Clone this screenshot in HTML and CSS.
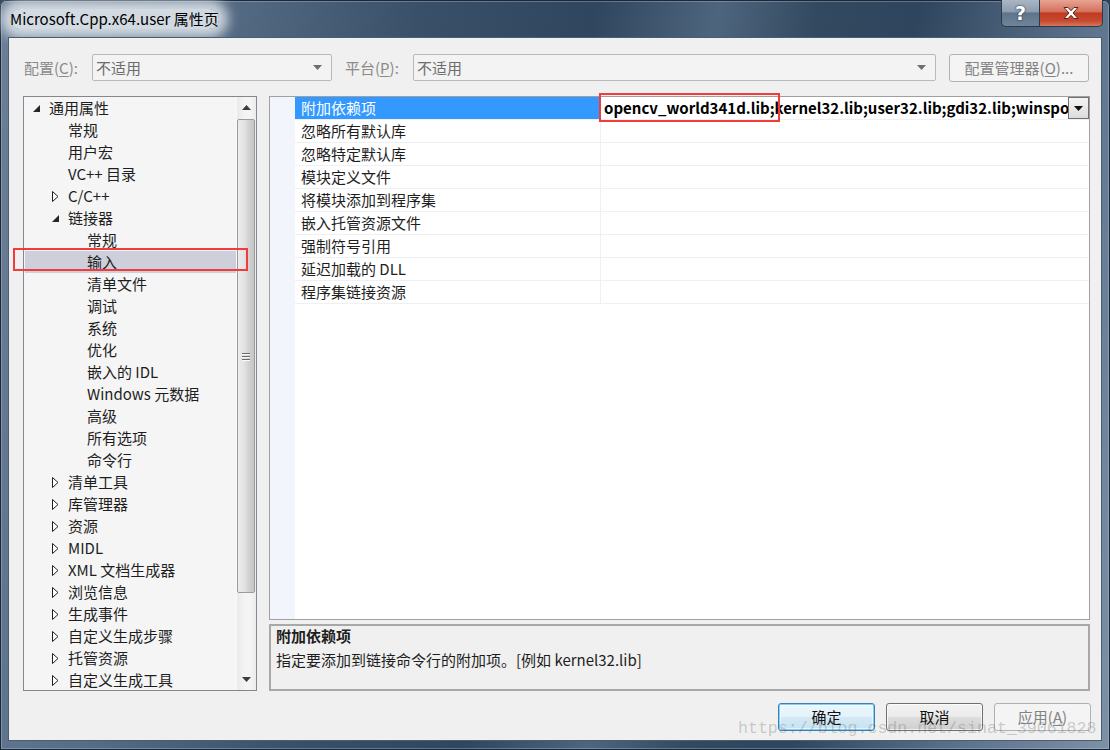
FILE: index.html
```html
<!DOCTYPE html>
<html lang="zh-CN">
<head>
<meta charset="utf-8">
<title>Microsoft.Cpp.x64.user 属性页</title>
<link rel="stylesheet" href="styles.css">
</head>
<body>
<div class="window">
  <div class="titlebar">
    <div class="title"><span class="title-glow">Microsoft.Cpp.x64.user 属性页</span></div>
    <div class="caption-btns">
      <div class="cap help">?</div>
      <div class="cap close">
        <svg width="20" height="14" viewBox="0 0 20 14"><path d="M3 1.5h4l3 3.2 3-3.2h4l-5 5.5 5 5.5h-4l-3-3.2-3 3.2H3l5-5.5z" fill="#fff" stroke="#5a2218" stroke-width="1" stroke-linejoin="round"/></svg>
      </div>
    </div>
  </div>
  <div class="client">
    <div class="toprow">
      <div class="lbl lbl1">配置(<u>C</u>):</div>
      <div class="combo combo1"><span>不适用</span><svg class="combo-arrow" width="9" height="5" viewBox="0 0 9 5"><path d="M0 0h9L4.5 5z" fill="#6e6e6e"/></svg></div>
      <div class="lbl lbl2">平台(<u>P</u>):</div>
      <div class="combo combo2"><span>不适用</span><svg class="combo-arrow" width="9" height="5" viewBox="0 0 9 5"><path d="M0 0h9L4.5 5z" fill="#6e6e6e"/></svg></div>
      <div class="spacer"></div>
      <div class="btn btn-disabled cfgmgr">配置管理器(<u>O</u>)...</div>
    </div>

    <div class="main">
      <div class="tree">
        <div class="tree-items">
          <div class="trow l0"><span class="exp"><svg width="8" height="8" viewBox="0 0 8 8"><path d="M7 0V7H0Z" fill="#262626"/></svg></span>通用属性</div>
          <div class="trow l1"><span class="exp"></span>常规</div>
          <div class="trow l1"><span class="exp"></span>用户宏</div>
          <div class="trow l1"><span class="exp"></span>VC++ 目录</div>
          <div class="trow l1"><span class="exp"><svg width="7" height="11" viewBox="0 0 7 11"><path d="M0.5 0.5L6 5.5L0.5 10.5Z" fill="#fff" stroke="#1e1e1e"/></svg></span>C/C++</div>
          <div class="trow l1"><span class="exp"><svg width="8" height="8" viewBox="0 0 8 8"><path d="M7 0V7H0Z" fill="#262626"/></svg></span>链接器</div>
          <div class="trow l2"><span class="exp"></span>常规</div>
          <div class="trow l2 selected"><span class="exp"></span>输入</div>
          <div class="trow l2"><span class="exp"></span>清单文件</div>
          <div class="trow l2"><span class="exp"></span>调试</div>
          <div class="trow l2"><span class="exp"></span>系统</div>
          <div class="trow l2"><span class="exp"></span>优化</div>
          <div class="trow l2"><span class="exp"></span>嵌入的 IDL</div>
          <div class="trow l2"><span class="exp"></span>Windows 元数据</div>
          <div class="trow l2"><span class="exp"></span>高级</div>
          <div class="trow l2"><span class="exp"></span>所有选项</div>
          <div class="trow l2"><span class="exp"></span>命令行</div>
          <div class="trow l1"><span class="exp"><svg width="7" height="11" viewBox="0 0 7 11"><path d="M0.5 0.5L6 5.5L0.5 10.5Z" fill="#fff" stroke="#1e1e1e"/></svg></span>清单工具</div>
          <div class="trow l1"><span class="exp"><svg width="7" height="11" viewBox="0 0 7 11"><path d="M0.5 0.5L6 5.5L0.5 10.5Z" fill="#fff" stroke="#1e1e1e"/></svg></span>库管理器</div>
          <div class="trow l1"><span class="exp"><svg width="7" height="11" viewBox="0 0 7 11"><path d="M0.5 0.5L6 5.5L0.5 10.5Z" fill="#fff" stroke="#1e1e1e"/></svg></span>资源</div>
          <div class="trow l1"><span class="exp"><svg width="7" height="11" viewBox="0 0 7 11"><path d="M0.5 0.5L6 5.5L0.5 10.5Z" fill="#fff" stroke="#1e1e1e"/></svg></span>MIDL</div>
          <div class="trow l1"><span class="exp"><svg width="7" height="11" viewBox="0 0 7 11"><path d="M0.5 0.5L6 5.5L0.5 10.5Z" fill="#fff" stroke="#1e1e1e"/></svg></span>XML 文档生成器</div>
          <div class="trow l1"><span class="exp"><svg width="7" height="11" viewBox="0 0 7 11"><path d="M0.5 0.5L6 5.5L0.5 10.5Z" fill="#fff" stroke="#1e1e1e"/></svg></span>浏览信息</div>
          <div class="trow l1"><span class="exp"><svg width="7" height="11" viewBox="0 0 7 11"><path d="M0.5 0.5L6 5.5L0.5 10.5Z" fill="#fff" stroke="#1e1e1e"/></svg></span>生成事件</div>
          <div class="trow l1"><span class="exp"><svg width="7" height="11" viewBox="0 0 7 11"><path d="M0.5 0.5L6 5.5L0.5 10.5Z" fill="#fff" stroke="#1e1e1e"/></svg></span>自定义生成步骤</div>
          <div class="trow l1"><span class="exp"><svg width="7" height="11" viewBox="0 0 7 11"><path d="M0.5 0.5L6 5.5L0.5 10.5Z" fill="#fff" stroke="#1e1e1e"/></svg></span>托管资源</div>
          <div class="trow l1"><span class="exp"><svg width="7" height="11" viewBox="0 0 7 11"><path d="M0.5 0.5L6 5.5L0.5 10.5Z" fill="#fff" stroke="#1e1e1e"/></svg></span>自定义生成工具</div>
        </div>
        <div class="vscroll">
          <div class="sb-btn"><svg width="9" height="5" viewBox="0 0 9 5"><path d="M4.5 0L9 5H0z" fill="#3c3c3c"/></svg></div>
          <div class="sb-track">
            <div class="sb-thumb"><div class="grip"><i></i><i></i><i></i></div></div>
          </div>
          <div class="sb-btn"><svg width="9" height="5" viewBox="0 0 9 5"><path d="M0 0h9L4.5 5z" fill="#3c3c3c"/></svg></div>
        </div>
      </div>

      <div class="right">
        <div class="grid">
          <div class="gutter"></div>
          <div class="grows">
            <div class="grow sel">
              <div class="gname">附加依赖项</div>
              <div class="gval"><span class="valtext">opencv_world341d.lib;kernel32.lib;user32.lib;gdi32.lib;winspool.lib;comdlg32.lib</span><div class="ddbtn"><svg width="9" height="5" viewBox="0 0 9 5"><path d="M0 0h9L4.5 5z" fill="#111"/></svg></div></div>
            </div>
            <div class="grow"><div class="gname">忽略所有默认库</div><div class="gval"></div></div>
            <div class="grow"><div class="gname">忽略特定默认库</div><div class="gval"></div></div>
            <div class="grow"><div class="gname">模块定义文件</div><div class="gval"></div></div>
            <div class="grow"><div class="gname">将模块添加到程序集</div><div class="gval"></div></div>
            <div class="grow"><div class="gname">嵌入托管资源文件</div><div class="gval"></div></div>
            <div class="grow"><div class="gname">强制符号引用</div><div class="gval"></div></div>
            <div class="grow"><div class="gname">延迟加载的 DLL</div><div class="gval"></div></div>
            <div class="grow"><div class="gname">程序集链接资源</div><div class="gval"></div></div>
          </div>
        </div>
        <div class="desc">
          <div class="desc-title">附加依赖项</div>
          <div class="desc-text">指定要添加到链接命令行的附加项。[例如 kernel32.lib]</div>
        </div>
      </div>
    </div>

    <div class="bottom">
      <div class="btn btn-default">确定</div>
      <div class="btn">取消</div>
      <div class="btn btn-disabled">应用(<u>A</u>)</div>
    </div>

    <div class="watermark">https://blog.csdn.net/sinat_39061828</div>
    <div class="redbox redbox-tree"></div>
    <div class="redbox redbox-val"></div>
  </div>
</div>
</body>
</html>
```

FILE: styles.css
```css
* { box-sizing: border-box; }
html, body { margin: 0; padding: 0; }
body {
  width: 1110px;
  height: 750px;
  overflow: hidden;
  font-family: "Noto Sans CJK SC", "Microsoft YaHei", "Noto Sans", sans-serif;
  font-size: 15px;
  color: #1e1e1e;
  background: #2b3f55;
}
u { text-decoration: underline; text-underline-offset: 2px; }

.window {
  width: 1110px;
  height: 750px;
  display: flex;
  flex-direction: column;
  padding: 0 8px 9px 8px;
  border-radius: 6px 6px 0 0;
  box-shadow: inset 0 0 0 1px #1b2736, inset 0 0 0 2px rgba(190, 205, 220, 0.35);
  background: linear-gradient(100deg, #6b8097 0%, #566c85 18%, #3a5069 34%, #30465e 48%, #4e657e 58%, #33495f 66%, #2f455e 74%, #5d738c 88%, #7d91a6 100%);
}

/* ---------- title bar ---------- */
.titlebar {
  height: 37px;
  display: flex;
  align-items: flex-start;
  justify-content: space-between;
}
.title {
  padding: 9px 0 0 2px;
  line-height: 20px;
  font-size: 15px;
  color: #000;
}
.title-glow {
  display: inline-block;
  background: rgba(236, 240, 244, 0.82);
  box-shadow: 0 0 12px 9px rgba(236, 240, 244, 0.8);
  border-radius: 12px;
}
.caption-btns {
  display: flex;
  margin-right: -1px;
}
.cap {
  height: 27px;
  display: flex;
  align-items: center;
  justify-content: center;
  border: 1px solid #2a3b4f;
  border-top: none;
}
.help {
  width: 38px;
  border-radius: 0 0 0 5px;
  background: linear-gradient(180deg, #a9b6c4 0%, #8d9caf 45%, #5f7389 50%, #6f8499 100%);
  color: #fff;
  font-family: "DejaVu Sans", sans-serif;
  font-weight: bold;
  font-size: 19px;
  text-shadow: 0 0 2px #243446, 0 0 1px #243446;
  border-right: none;
}
.close {
  width: 64px;
  border-radius: 0 0 5px 0;
  background: linear-gradient(180deg, #e8a493 0%, #d2705b 45%, #c23a22 50%, #c54a2f 80%, #d8765c 100%);
}

/* ---------- client ---------- */
.client {
  flex: 1;
  min-width: 0;
  position: relative;
  background: #f0f0f0;
  border: 1px solid #4b5d70;
  padding: 16px 11px 9px 14px;
  display: flex;
  flex-direction: column;
}

.toprow {
  height: 28px;
  display: flex;
  align-items: flex-start;
}
.lbl {
  height: 27px;
  line-height: 27px;
  color: #8a8a8a;
  font-size: 15px;
}
.lbl1 { width: 69px; padding-left: 1px; }
.lbl2 { width: 68px; margin-left: 13px; }
.combo {
  height: 27px;
  border: 1px solid #b9b9b9;
  border-radius: 2px;
  background: #f3f3f3;
  display: flex;
  align-items: center;
  justify-content: space-between;
  padding: 0 9px 0 3px;
  color: #6d6d6d;
  font-size: 15px;
  line-height: 25px;
}
.combo1 { width: 240px; }
.combo2 { width: 523px; }
.combo-arrow { flex: none; }
.spacer { flex: 1; }

.btn {
  width: 97px;
  height: 28px;
  border: 1px solid #707070;
  border-radius: 3px;
  background: linear-gradient(180deg, #f2f2f2 0%, #ebebeb 48%, #dddddd 52%, #cfcfcf 100%);
  box-shadow: inset 0 0 0 1px rgba(255,255,255,0.7);
  display: flex;
  align-items: center;
  justify-content: center;
  font-size: 15px;
  line-height: 20px;
  color: #111;
}
.btn-disabled {
  border-color: #adb2b5;
  background: #f4f4f4;
  box-shadow: none;
  color: #838383;
}
.cfgmgr { width: 140px; margin-right: 1px; }
.btn-default {
  border-color: #3c7fb1;
  box-shadow: inset 0 0 0 1px #7fd0f6, inset 0 0 0 2px rgba(255,255,255,0.6);
  background: linear-gradient(180deg, #eaf6fd 0%, #e4f2fa 48%, #d3e8f5 52%, #c8e1f0 100%);
}

/* ---------- main ---------- */
.main {
  margin-top: 14px;
  height: 595px;
  display: flex;
  gap: 12px;
  min-width: 0;
}

.tree {
  width: 234px;
  flex: none;
  border: 1px solid #828790;
  background: #f5f5f5;
  display: flex;
  overflow: hidden;
}
.tree-items {
  flex: 1;
  overflow: hidden;
}
.trow {
  height: 22px;
  line-height: 22px;
  display: flex;
  align-items: center;
  white-space: nowrap;
  font-size: 15px;
  color: #1e1e1e;
}
.trow.l0 { padding-left: 9px; }
.trow.l1 { padding-left: 28px; }
.trow.l2 { padding-left: 47px; }
.exp {
  width: 16px;
  flex: none;
  display: flex;
  align-items: center;
  height: 22px;
  padding-top: 1px;
}
.trow.selected { background: #cdcfdb; margin-left: 1px; padding-left: 46px; }

.vscroll {
  width: 20px;
  flex: none;
  display: flex;
  flex-direction: column;
  background: linear-gradient(90deg, #e9e9e9, #f4f4f4 40%, #f4f4f4 70%, #ebebeb);
  border-left: 1px solid #f9f9f9;
}
.sb-btn {
  height: 21px;
  display: flex;
  align-items: center;
  justify-content: center;
}
.sb-track {
  flex: 1;
  padding-top: 1px;
}
.sb-thumb {
  height: 474px;
  margin: 0 1px 0 0;
  border: 1px solid #9b9b9b;
  border-radius: 2px;
  background: linear-gradient(90deg, #ececec 0%, #e2e2e2 40%, #d0d0d0 70%, #c6c6c6 100%);
  display: flex;
  align-items: center;
  justify-content: center;
}
.grip {
  display: flex;
  flex-direction: column;
  gap: 2px;
}
.grip i {
  display: block;
  width: 8px;
  height: 1px;
  background: #6b6b6b;
  box-shadow: 0 1px 0 #fafafa;
}

.right {
  flex: 1;
  min-width: 0;
  display: flex;
  flex-direction: column;
  gap: 4px;
}
.grid {
  height: 524px;
  min-width: 0;
  border: 1px solid #a0a0a0;
  background: #fff;
  display: flex;
  overflow: hidden;
}
.gutter {
  width: 25px;
  flex: none;
  background: #f2f5fb;
}
.grows { flex: 1; min-width: 0; }
.grow {
  height: 23px;
  display: flex;
  border-bottom: 1px solid #eef0f4;
}
.gname {
  width: 306px;
  flex: none;
  padding-left: 6px;
  line-height: 22px;
  font-size: 15px;
  border-right: 1px solid #eef0f4;
  white-space: nowrap;
}
.grow.sel .gname {
  background: #3399ff;
  color: #fff;
}
.gval {
  flex: 1;
  display: flex;
  align-items: center;
  min-width: 0;
}
.valtext {
  flex: 1;
  min-width: 0;
  overflow: hidden;
  white-space: nowrap;
  font-weight: bold;
  color: #000;
  padding-left: 3px;
  line-height: 22px;
  font-size: 15px;
}
.ddbtn {
  width: 21px;
  height: 22px;
  flex: none;
  border: 1px solid #707070;
  background: linear-gradient(180deg, #f4f4f4, #dcdcdc);
  display: flex;
  align-items: center;
  justify-content: center;
}

.desc {
  flex: 1;
  border: 2px solid #a8a8a8;
  background: #f0f0f0;
  padding: 0 0 0 5px;
}
.desc-title {
  font-weight: bold;
  line-height: 20px;
  font-size: 15px;
}
.desc-text {
  margin-top: 4px;
  line-height: 20px;
  font-size: 15px;
}

/* ---------- bottom buttons ---------- */
.bottom {
  margin-top: 12px;
  display: flex;
  justify-content: flex-end;
  gap: 11px;
  margin-right: -1px;
}

/* ---------- overlays ---------- */
.watermark {
  position: absolute;
  left: 729px;
  top: 680px;
  font-family: "Liberation Mono", monospace;
  font-size: 16.6px;
  line-height: 22px;
  color: rgba(110, 110, 110, 0.32);
  white-space: nowrap;
  pointer-events: none;
}
.redbox {
  position: absolute;
  border: 2px solid #f23c3c;
  pointer-events: none;
}
.redbox-tree { left: 4px; top: 210px; width: 235px; height: 23px; }
.redbox-val { left: 590px; top: 55px; width: 181px; height: 29px; }
```
